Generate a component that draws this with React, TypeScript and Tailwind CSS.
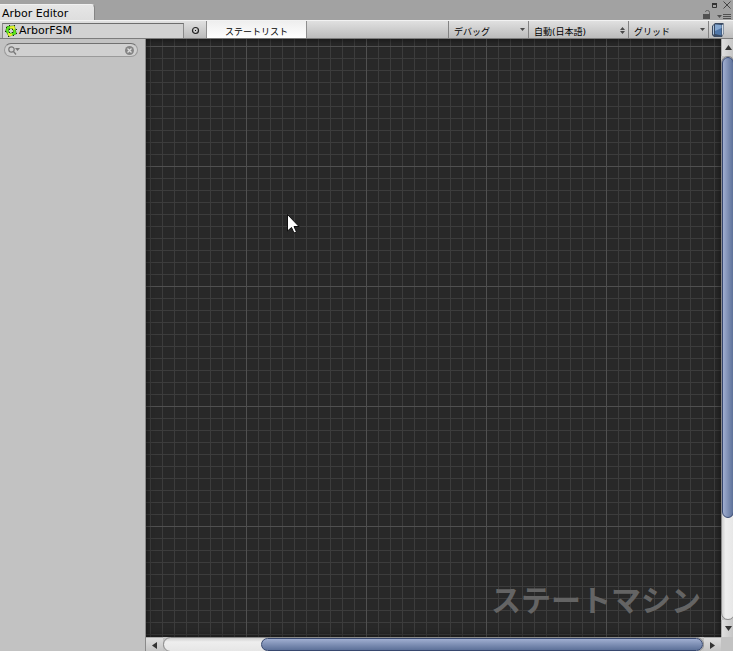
import React from 'react';

function ToolbarSelect({ label, value, width, kind }: { label: string; value: string; width: string; kind: 'menu' | 'popup' }) {
  return (
    <div className={`relative h-full shrink-0 border-l border-[#838383] ${width}`}>
      <select
        aria-label={label}
        className="block h-full w-full appearance-none bg-transparent pt-1 pr-4 pl-[5px] text-[9px] leading-[14px] text-black outline-none"
      >
        <option>{value}</option>
      </select>
      {kind === 'menu' ? (
        <svg className="pointer-events-none absolute top-[7px] right-[3px] h-[3px] w-[5px]" viewBox="0 0 5 3" fill="#4a4a4a">
          <path d="M0 0h5L2.5 3z" />
        </svg>
      ) : (
        <svg className="pointer-events-none absolute top-[6px] right-[3px] h-[7px] w-[5px]" viewBox="0 0 5 7" fill="#4a4a4a">
          <path d="M0 3L2.5 0L5 3zM0 4h5L2.5 7z" />
        </svg>
      )}
    </div>
  );
}

function TabStrip() {
  return (
    <header className="flex h-5 shrink-0 items-end justify-between bg-[#a2a2a2]">
      <button className="h-4 w-[95px] rounded-tr-[4px] border-t border-r border-t-[#f0f0f0] border-r-[#858585] bg-linear-to-b from-[#e6e6e6] to-[#dedede] pt-px pl-[2px] text-left text-[11px] leading-4 text-black">
        Arbor Editor
      </button>
      <div className="flex h-full flex-col justify-between pt-px pr-[2px]">
        <div className="flex items-center justify-end gap-[6px]">
          <button aria-label="Maximize" className="h-[8px] w-[5px]">
            <svg className="block h-[8px] w-[5px]" viewBox="0 0 5 8">
              <path d="M.5 3.5h4v3h-4z" fill="none" stroke="#333" />
              <path d="M0 2h5v2H0z" fill="#333" />
            </svg>
          </button>
          <button aria-label="Close" className="h-[8px] w-[8px]">
            <svg className="block h-[8px] w-[8px]" viewBox="0 0 8 8" stroke="#444" fill="none">
              <path d="M.5 .5L7.500 7.500M7.500 .5L.5 7.500" />
            </svg>
          </button>
        </div>
        <div className="flex items-start gap-[6px]">
          <button aria-label="Lock" className="h-[10px] w-[8px]">
            <svg className="block h-[10px] w-[8px]" viewBox="0 0 8 10">
              <path d="M0 4h7v5H0z" fill="#505050" />
              <path d="M2.500 2V1.500Q2.500 .5 4.500 .5Q6.500 .5 6.500 2.500V4" fill="none" stroke="#5e5e5e" />
            </svg>
          </button>
          <button aria-label="Window menu" className="h-[10px] w-[14px]">
            <svg className="block h-[10px] w-[14px]" viewBox="0 0 14 10">
              <path d="M0 5h5L2.5 8z" fill="#505050" />
              <path d="M6 4.500h8M6 6.500h8M6 8.500h8" stroke="#505050" />
            </svg>
          </button>
        </div>
      </div>
    </header>
  );
}

function ArborIcon() {
  return (
    <svg className="mr-[2px] h-[12px] w-[12px] shrink-0" viewBox="0 0 12 12">
      <path d="M3 2.500L8.500 2L10 8L4.500 10L2 5.500z" fill="none" stroke="#3a7d12" strokeWidth="3" />
      <path d="M3 2.500L8.500 2L10 8L4.500 10L2 5.500z" fill="none" stroke="#5be81f" strokeWidth="2" />
      <path d="M5 2.500L8.500 2L9 4.500M7 9.500L4.500 10L3.500 8" fill="none" stroke="#f2ee2c" strokeWidth="2" />
      <path d="M1 2h1v1H1zM4 0h1v1H4zM9 0h1v1H9zM11 4h1v1h-1zM11 8h1v1h-1zM8 10h1v1H8zM3 11h1v1H3zM0 6h1v1H0zM4 4h1v1H4zM7 4h1v1H7zM7 7h1v1H7zM4 7h1v1H4z" fill="#182a10" />
    </svg>
  );
}

function Toolbar() {
  return (
    <div className="flex h-[19px] shrink-0 items-stretch border-t border-b border-t-[#f2f2f2] border-b-[#7c7c7c] bg-linear-to-b from-[#e0e0e0] to-[#bcbcbc]">
      <button className="mt-[2px] ml-[2px] flex w-[182px] shrink-0 items-center border border-b-0 border-[#8b8b8b] border-t-[#6e6e6e] bg-[#d2d2d2] pl-[2px] text-[11px] leading-[14px] text-black">
        <ArborIcon />
        ArborFSM
      </button>
      <button aria-label="Select object" className="flex w-[22px] shrink-0 items-center justify-center pt-px">
        <svg className="h-[9px] w-[9px]" viewBox="0 0 9 9">
          <circle cx="4.500" cy="4.500" r="3" fill="none" stroke="#222" strokeWidth="1.200" />
          <path d="M4 4h1v1H4z" fill="#111" />
        </svg>
      </button>
      <button className="w-[101px] shrink-0 border-x border-[#8e8e8e] bg-linear-to-b from-[#eeeeee] to-white pt-1 text-center text-[9px] leading-[14px] text-black">
        ステートリスト
      </button>
      <div className="flex-1" />
      <ToolbarSelect label="Debug" value="デバッグ" width="w-[80px]" kind="menu" />
      <ToolbarSelect label="Language" value="自動(日本語)" width="w-[100px]" kind="popup" />
      <ToolbarSelect label="Grid" value="グリッド" width="w-[80px]" kind="menu" />
      <button aria-label="Help" className="flex w-[25px] shrink-0 items-center border-l border-[#838383] pl-[3px]">
        <svg className="h-[14px] w-[12px]" viewBox="0 0 12 14">
          <path d="M1 2L3 0h8l1 1v9l-2 4H2L0 12V3z" fill="#3a4a62" />
          <path d="M10 2l1.500-1V10L10 13z" fill="#d5dde6" />
          <path d="M3 1.500L9.500 2v10.500L3 11z" fill="#4f76a8" />
          <path d="M3 1.500L9.500 2v3L3 8z" fill="#86a8d0" />
          <path d="M1 3l1-1v10l-1-1z" fill="#b4c8de" />
        </svg>
      </button>
    </div>
  );
}

function StateList() {
  return (
    <aside className="w-[146px] shrink-0 border-r border-[#8a8a8a] bg-[#c2c2c2] px-1 pt-1">
      <label className="mr-[3px] flex h-[14px] items-center rounded-full border border-[#9a9a9a] border-t-[#707070] bg-[#d0d0d0] pr-[3px] pl-[3px]">
        <svg className="h-[9px] w-[12px] shrink-0" viewBox="0 0 12 9">
          <circle cx="3.500" cy="3.500" r="2.700" fill="none" stroke="#777" strokeWidth="1.200" />
          <path d="M5.500 5.500L8 8.500" stroke="#777" strokeWidth="1.300" />
          <path d="M7 2h5L9.500 5z" fill="#777" />
        </svg>
        <input type="text" aria-label="Search" className="h-full w-0 flex-1 bg-transparent text-[9px] outline-none" />
        <button aria-label="Clear search" className="shrink-0">
          <svg className="h-[9px] w-[9px]" viewBox="0 0 9 9">
            <circle cx="4.500" cy="4.500" r="4.500" fill="#858585" />
            <path d="M2.500 2.500l4 4M6.500 2.500l-4 4" stroke="#dedede" strokeWidth="1.300" />
          </svg>
        </button>
      </label>
    </aside>
  );
}

function GraphView() {
  return (
    <main className="relative flex min-w-0 flex-1 items-end justify-end overflow-hidden bg-[#282828]">
      <div className="absolute inset-0 bg-[linear-gradient(to_right,#3c3c3c_1px,transparent_1px),linear-gradient(to_bottom,#3c3c3c_1px,transparent_1px)] bg-[size:12px_12px] bg-[position:4px_7px]" />
      <div className="absolute inset-0 bg-[linear-gradient(to_right,#505050_1px,transparent_1px),linear-gradient(to_bottom,#505050_1px,transparent_1px)] bg-[size:120px_120px] bg-[position:100px_7px]" />
      <div className="absolute inset-0 shadow-[inset_0_0_6px_1px_rgba(0,0,0,0.5)]" />
      <h1 className="relative pr-5 pb-3 text-[30px] leading-[48px] font-bold text-[#646464]">ステートマシン</h1>
      <svg className="absolute top-[175px] left-[141px] h-[21px] w-[13px]" viewBox="0 0 13 21">
        <path d="M.5 .5V17L4.500 13.500L7 19L9.500 18L7 12.500H12z" fill="#fff" stroke="#111" />
      </svg>
    </main>
  );
}

function VerticalScrollbar() {
  return (
    <div className="flex w-3 shrink-0 flex-col overflow-hidden bg-[#c2c2c2]">
      <button aria-label="Scroll up" className="flex h-[17px] w-[14px] shrink-0 items-center justify-center border-l border-[#aaa] bg-linear-to-r from-[#dedede] to-[#c2c2c2]">
        <svg className="h-[5px] w-[7px]" viewBox="0 0 7 5"><path d="M0 5h7L3.500 0z" fill="#333" /></svg>
      </button>
      <div className="flex w-[14px] flex-1 flex-col rounded-full border border-[#8a8a8a] bg-linear-to-r from-[#cfcfcf] via-[#eeeeee] via-30% to-[#e6e6e6]">
        <div className="h-[82%] w-full rounded-full border border-[#37486f] bg-linear-to-r from-[#a0aed0] to-[#5d7199]" />
      </div>
      <button aria-label="Scroll down" className="flex h-[17px] w-[14px] shrink-0 items-center justify-center border-l border-[#aaa] bg-linear-to-r from-[#dedede] to-[#c2c2c2]">
        <svg className="h-[5px] w-[7px]" viewBox="0 0 7 5"><path d="M0 0h7L3.500 5z" fill="#333" /></svg>
      </button>
    </div>
  );
}

function HorizontalScrollbar() {
  return (
    <div className="flex h-[14px] shrink-0 items-start overflow-hidden bg-[#c2c2c2] pr-3">
      <button aria-label="Scroll left" className="flex h-[15px] w-[17px] shrink-0 items-center justify-center border-t border-[#aaa] bg-linear-to-b from-[#dedede] to-[#c2c2c2]">
        <svg className="h-[7px] w-[5px]" viewBox="0 0 5 7"><path d="M5 0v7L0 3.500z" fill="#333" /></svg>
      </button>
      <div className="flex h-[15px] flex-1 justify-end rounded-full border border-[#8a8a8a] bg-linear-to-b from-[#cfcfcf] via-[#eeeeee] via-30% to-[#e6e6e6]">
        <div className="h-full w-[82%] rounded-full border border-[#37486f] bg-linear-to-b from-[#a0aed0] to-[#5d7199]" />
      </div>
      <button aria-label="Scroll right" className="flex h-[15px] w-[17px] shrink-0 items-center justify-center border-t border-[#aaa] bg-linear-to-b from-[#dedede] to-[#c2c2c2]">
        <svg className="h-[7px] w-[5px]" viewBox="0 0 5 7"><path d="M0 0v7L5 3.500z" fill="#333" /></svg>
      </button>
    </div>
  );
}

export default function App() {
  return (
    <div className="flex h-screen flex-col overflow-hidden bg-[#c2c2c2] font-['DejaVu_Sans','Noto_Sans_CJK_JP',sans-serif]">
      <TabStrip />
      <Toolbar />
      <div className="flex min-h-0 flex-1">
        <StateList />
        <div className="flex min-w-0 flex-1 flex-col">
          <div className="flex min-h-0 flex-1">
            <GraphView />
            <VerticalScrollbar />
          </div>
          <HorizontalScrollbar />
        </div>
      </div>
    </div>
  );
}
